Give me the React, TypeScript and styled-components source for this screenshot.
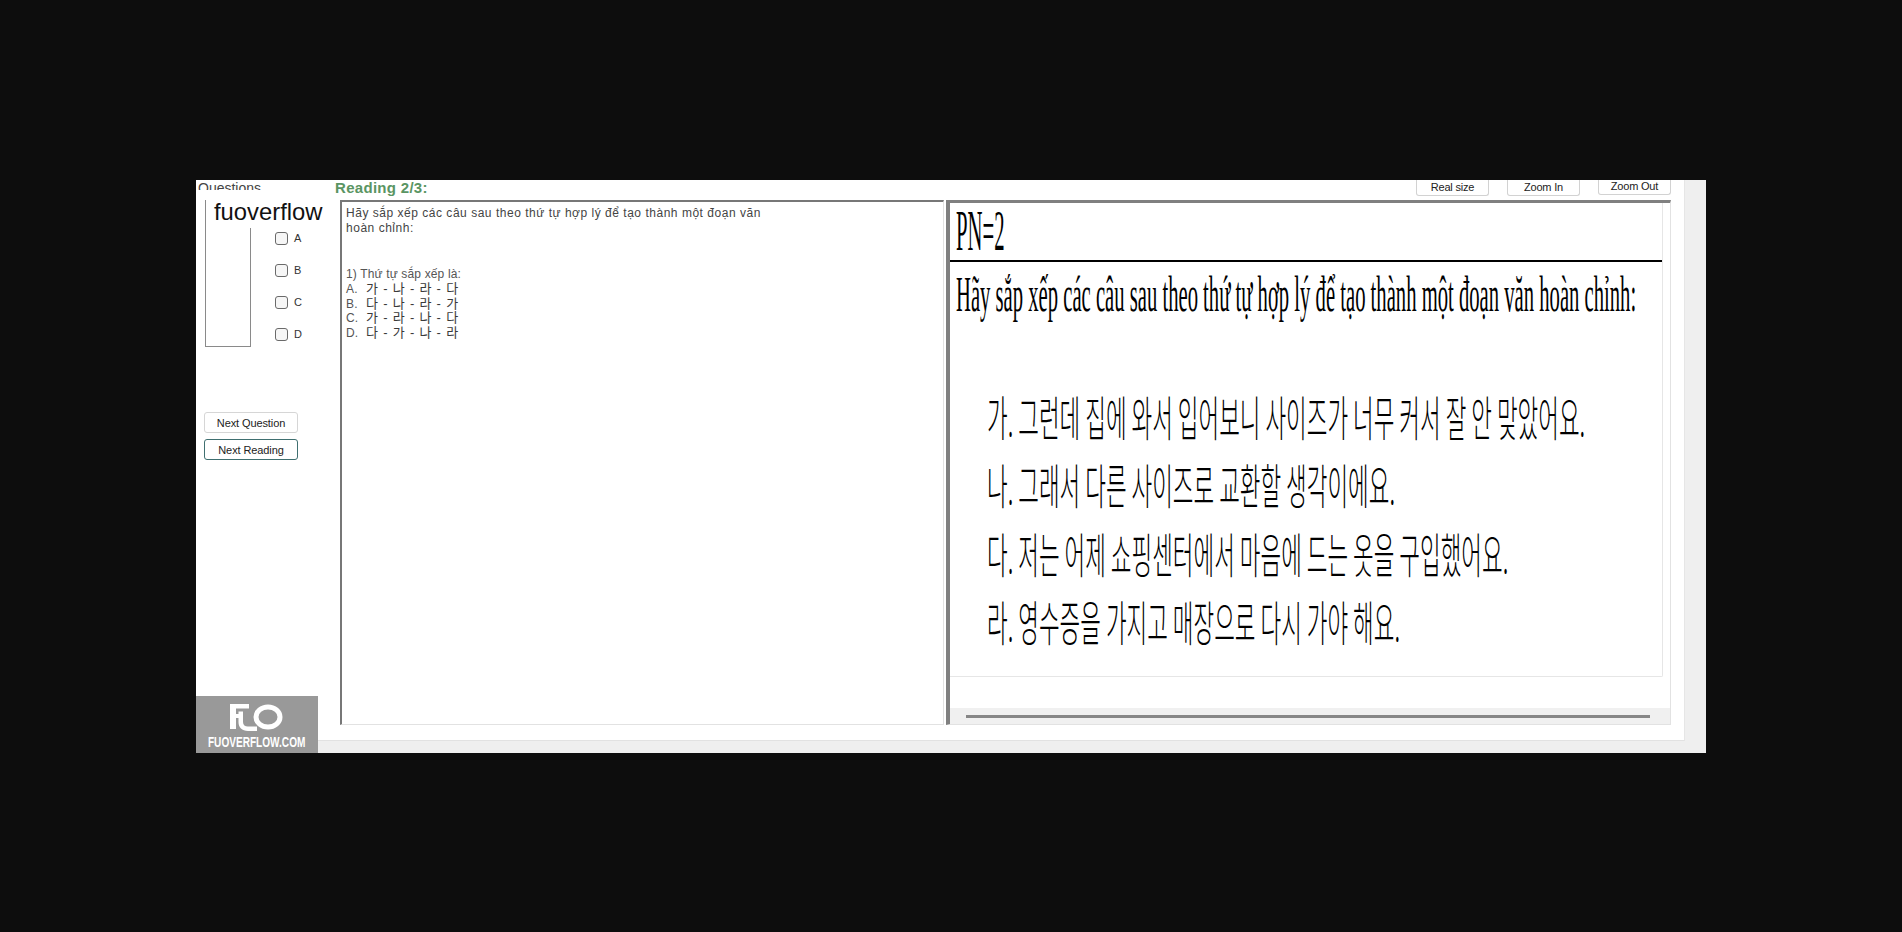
import { createGlobalStyle, styled } from 'styled-components';

const GlobalStyle = createGlobalStyle`
  html, body {
    margin: 0;
    padding: 0;
    background: #0d0d0d;
  }
  * {
    box-sizing: border-box;
  }
`;

const uiFont = `"Liberation Sans", "Noto Sans CJK KR", sans-serif`;

const koreanLines = [
  '가. 그런데 집에 와서 입어보니 사이즈가 너무 커서 잘 안 맞았어요.',
  '나. 그래서 다른 사이즈로 교환할 생각이에요.',
  '다. 저는 어제 쇼핑센터에서 마음에 드는 옷을 구입했어요.',
  '라. 영수증을 가지고 매장으로 다시 가야 해요.',
];

const answers = [
  { label: 'A.', order: '가 - 나 - 라 - 다' },
  { label: 'B.', order: '다 - 나 - 라 - 가' },
  { label: 'C.', order: '가 - 라 - 나 - 다' },
  { label: 'D.', order: '다 - 가 - 나 - 라' },
];

export default function App() {
  return (
    <>
      <GlobalStyle />
      <Page>
        <Window>
          <Surface>
            <Sidebar>
              <GroupLabel>Questions</GroupLabel>
              <GroupRow>
                <GroupBox />
                <Options>
                  {['A', 'B', 'C', 'D'].map((letter) => (
                    <Option key={letter}>
                      <Check type="checkbox" />
                      {letter}
                    </Option>
                  ))}
                </Options>
              </GroupRow>
              <NavButtons>
                <NavButton>Next Question</NavButton>
                <NavButton $focused>Next Reading</NavButton>
              </NavButtons>
              <Watermark>fuoverflow</Watermark>
            </Sidebar>
            <Main>
              <TopBar>
                <Title>Reading 2/3:</Title>
                <ZoomButtons>
                  <ZoomButton>Real size</ZoomButton>
                  <ZoomButton>Zoom In</ZoomButton>
                  <ZoomButton $lift>Zoom Out</ZoomButton>
                </ZoomButtons>
              </TopBar>
              <Panes>
                <TextPane>
                  <Paragraph>
                    Hãy sắp xếp các câu sau theo thứ tự hợp lý để tạo thành một đoạn văn
                    <br />
                    hoàn chỉnh:
                  </Paragraph>
                  <Answers>
                    <AnswerLine>1) Thứ tự sắp xếp là:</AnswerLine>
                    {answers.map((answer) => (
                      <AnswerLine key={answer.label}>
                        <AnswerLabel>{answer.label}</AnswerLabel>
                        <AnswerOrder>{answer.order}</AnswerOrder>
                      </AnswerLine>
                    ))}
                  </Answers>
                </TextPane>
                <ImagePane>
                  <Picture>
                    <PictureHead>
                      <SerifText $size={56} $squeeze={0.37}>
                        PN=2
                      </SerifText>
                    </PictureHead>
                    <Sentence>
                      <SerifText $size={50} $squeeze={0.413}>
                        Hãy sắp xếp các câu sau theo thứ tự hợp lý để tạo thành một đoạn văn hoàn chỉnh:
                      </SerifText>
                    </Sentence>
                    <KoreanList>
                      {koreanLines.map((line) => (
                        <KoreanLine key={line}>{line}</KoreanLine>
                      ))}
                    </KoreanList>
                  </Picture>
                  <ScrollTrack>
                    <ScrollThumb />
                  </ScrollTrack>
                </ImagePane>
              </Panes>
            </Main>
          </Surface>
          <Logo>
            <svg width="66" height="36" viewBox="0 0 66 36" fill="none">
              <path d="M6 6H25V10.5H12V16H14.5V13.5H19V24C19 27 21 28.5 24 28.5H33V33H24C18 33 14.5 29.5 14.5 24V20H12V31H6Z" fill="#fff" />
              <ellipse cx="44" cy="19" rx="12" ry="10" stroke="#fff" strokeWidth="5" />
            </svg>
            <LogoText>FUOVERFLOW.COM</LogoText>
          </Logo>
        </Window>
      </Page>
    </>
  );
}

const Page = styled.div`
  width: 1902px;
  height: 932px;
  padding: 180px 196px;
  overflow: hidden;
`;

const Window = styled.div`
  position: relative;
  width: 1510px;
  height: 573px;
  background: #efefef;
`;

const Surface = styled.div`
  display: flex;
  width: 1489px;
  height: 561px;
  background: #fff;
  border-right: 1px solid #e6e6e6;
  border-bottom: 1px solid #e2e2e2;
  font-family: ${uiFont};
  overflow: hidden;
`;

const Sidebar = styled.aside`
  position: relative;
  flex: 0 0 139px;
`;

const GroupLabel = styled.div`
  height: 10px;
  margin: 0 0 10px 2px;
  overflow: hidden;
  font-size: 14px;
  line-height: 16px;
  color: #444;
`;

const GroupRow = styled.div`
  display: flex;
`;

const GroupBox = styled.div`
  width: 46px;
  height: 147px;
  margin-left: 9px;
  border: 1px solid #8a8a8a;
  border-top: none;
`;

const Options = styled.div`
  margin: 22px 0 0 24px;
`;

const Option = styled.label`
  display: flex;
  align-items: center;
  gap: 6px;
  height: 32px;
  font-size: 11px;
  color: #333;
`;

const Check = styled.input`
  appearance: none;
  width: 13px;
  height: 13px;
  margin: 0;
  background: #f6f6f6;
  border: 1px solid #6a6a6a;
  border-radius: 3px;
`;

const NavButtons = styled.div`
  display: flex;
  flex-direction: column;
  gap: 6px;
  width: 94px;
  margin: 62px 0 0 8px;
`;

const NavButton = styled.button<{ $focused?: boolean }>`
  height: 21px;
  padding: 0;
  background: #fff;
  border: 1px solid ${({ $focused }) => ($focused ? '#3f6f70' : '#d6d6d6')};
  border-radius: 3px;
  font-family: ${uiFont};
  font-size: 11px;
  letter-spacing: -0.1px;
  color: #222;
`;

const Watermark = styled.div`
  position: absolute;
  top: 18px;
  left: 18px;
  height: 30px;
  padding-right: 3px;
  background: #fff;
  font-size: 23.8px;
  line-height: 28px;
  color: #111;
`;

const Main = styled.main`
  display: flex;
  flex: 1;
  flex-direction: column;
  min-width: 0;
`;

const TopBar = styled.header`
  display: flex;
  justify-content: space-between;
  height: 20px;
  padding-right: 13px;
`;

const Title = styled.h1`
  margin: 0;
  font-size: 15px;
  font-weight: 700;
  line-height: 16px;
  letter-spacing: 0.3px;
  color: #5a9563;
`;

const ZoomButtons = styled.div`
  display: flex;
  gap: 18px;
  height: 16px;
`;

const ZoomButton = styled.button<{ $lift?: boolean }>`
  width: 73px;
  height: ${({ $lift }) => ($lift ? 15 : 16)}px;
  padding: 0 0 ${({ $lift }) => ($lift ? 2 : 0)}px;
  background: #fff;
  border: 1px solid #d2d2d2;
  border-top: none;
  border-radius: 0 0 3px 3px;
  font-family: ${uiFont};
  font-size: 11px;
  line-height: 13px;
  letter-spacing: -0.2px;
  color: #222;
`;

const Panes = styled.div`
  display: flex;
  gap: 2px;
  height: 525px;
  margin: 0 13px 0 5px;
`;

const TextPane = styled.section`
  flex: 0 0 604px;
  padding: 4px 0 0 4px;
  border: 1px solid #e2e2e2;
  border-top: 2px solid #777;
  border-left: 2px solid #777;
  color: #444;
  font-size: 12px;
  line-height: 15px;
`;

const Paragraph = styled.p`
  margin: 0;
  letter-spacing: 0.52px;
`;

const Answers = styled.div`
  margin-top: 31px;
  color: #555;
`;

const AnswerLine = styled.div`
  display: flex;
  height: 14.8px;
  line-height: 14.8px;
  letter-spacing: 0.15px;
  white-space: pre;
`;

const AnswerLabel = styled.span`
  flex: 0 0 20px;
`;

const AnswerOrder = styled.span`
  font-size: 13px;
  letter-spacing: 0.8px;
  color: #3a3a3a;
`;

const ImagePane = styled.section`
  display: flex;
  flex: 1;
  flex-direction: column;
  justify-content: space-between;
  min-width: 0;
  border: 1px solid #e2e2e2;
  border-top: 3px solid #808080;
  border-left: 4px solid #808080;
`;

const Picture = styled.div`
  height: 474px;
  margin-right: 7px;
  overflow: hidden;
  border-right: 1px solid #e6e6e6;
  border-bottom: 1px solid #e6e6e6;
  border-radius: 0 0 2px 0;
  color: #000;
`;

const PictureHead = styled.div`
  height: 59px;
  padding-left: 6px;
  border-bottom: 2px solid #000;
`;

const SerifText = styled.div<{ $size: number; $squeeze: number }>`
  width: max-content;
  font-family: "Liberation Serif", serif;
  font-size: ${({ $size }) => $size}px;
  line-height: 57px;
  white-space: nowrap;
  transform: scaleX(${({ $squeeze }) => $squeeze});
  transform-origin: left center;
`;

const Sentence = styled.div`
  height: 57px;
  margin-top: 4px;
  padding-left: 6px;
`;

const KoreanList = styled.div`
  margin-top: 58px;
  padding-left: 37px;
`;

const KoreanLine = styled.div`
  width: max-content;
  height: 68.4px;
  font-family: "Noto Sans CJK KR", sans-serif;
  font-size: 48px;
  font-weight: 300;
  line-height: 68.4px;
  white-space: nowrap;
  transform: scaleX(0.468);
  transform-origin: left center;
`;

const ScrollTrack = styled.div`
  display: flex;
  align-items: center;
  height: 16px;
  padding: 0 16px;
  background: #f0f0f0;
`;

const ScrollThumb = styled.div`
  width: 684px;
  height: 3px;
  background: #868686;
`;

const Logo = styled.div`
  position: absolute;
  left: 0;
  bottom: 0;
  display: flex;
  flex-direction: column;
  align-items: center;
  width: 122px;
  height: 57px;
  padding-top: 2px;
  background: #999;

  svg {
    flex: none;
  }
`;

const LogoText = styled.div`
  width: max-content;
  margin-top: 1px;
  font-family: "Liberation Sans", sans-serif;
  font-size: 14px;
  font-weight: 700;
  line-height: 14px;
  color: #fff;
  transform: scaleX(0.72);
`;
